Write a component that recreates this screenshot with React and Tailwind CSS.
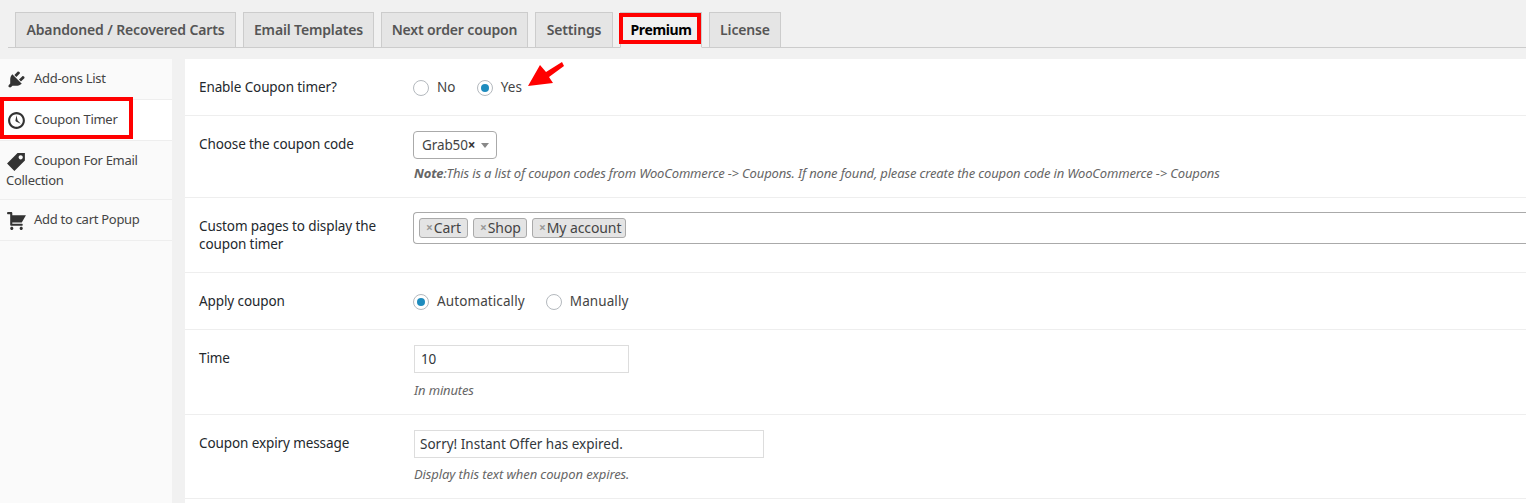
import React from "react";

const font = { fontFamily: '"Noto Sans", sans-serif' };

const icons = {
  plug: "M13.11 4.36L9.87 7.6 8 5.73l3.24-3.24c.35-.34 1.05-.2 1.56.32.52.51.66 1.21.31 1.55zm-8 1.77l.91-1.12 9.01 9.01-1.19.84c-.71.71-2.63 1.16-3.82 1.16H6.14L4.9 17.26c-.59.59-1.54.59-2.12 0-.59-.58-.59-1.53 0-2.12l1.24-1.24v-3.88c0-1.13.4-3.19 1.09-3.89zm7.26 3.97l3.24-3.24c.34-.35 1.04-.21 1.55.31.52.51.66 1.21.31 1.55l-3.24 3.25z",
  clock: "M10 2c4.42 0 8 3.58 8 8s-3.58 8-8 8-8-3.58-8-8 3.58-8 8-8zm0 14c3.31 0 6-2.69 6-6s-2.69-6-6-6-6 2.69-6 6 2.69 6 6 6zm-.71-5.29c.07.05.14.1.23.15l-.02.02L14 13l-3.03-3.19L10 5l-.97 4.81h.01c0 .02-.01.05-.02.09S9 9.97 9 10c0 .28.1.52.29.71z",
  tag: "M11 2h7v7L8 19l-7-7zm3 6c1.1 0 2-.9 2-2s-.9-2-2-2-2 .9-2 2 .9 2 2 2z",
  cart: "M6 13h9c.55 0 1 .45 1 1s-.45 1-1 1H5c-.55 0-1-.45-1-1V4H2c-.55 0-1-.45-1-1s.45-1 1-1h3c.55 0 1 .45 1 1v2h13l-4 7H6v1zm-.5 3c.83 0 1.5.67 1.5 1.5S6.33 19 5.5 19 4 18.33 4 17.5 4.67 16 5.5 16zm9 0c.83 0 1.5.67 1.5 1.5s-.67 1.5-1.5 1.5-1.5-.67-1.5-1.5.67-1.5 1.5-1.5z",
};

function Dash({ d }) {
  return (
    <svg width="21" height="21" viewBox="0 0 20 20" fill="#333" className="block">
      <path d={d} />
    </svg>
  );
}

function Tab({ children, active, w }) {
  return (
    <div className={`relative h-[36px] ${w} flex items-center justify-center border border-[#ccc] pb-[2px] text-[14px] ${active ? "bg-[#f1f1f1] font-bold tracking-[-0.35px] text-black border-b-[#f1f1f1]" : "bg-[#e5e5e5] font-semibold tracking-[-0.15px] text-[#555]"}`}>
      {children}
      {active && <div className="absolute left-[-2px] right-0 top-0 h-[31px] border-[4px] border-[#f00]" />}
    </div>
  );
}

function SideItem({ icon, children, h, active, wrap }) {
  return (
    <div className={`relative ${h} border-b border-[#eee] text-[13px] tracking-[-0.28px] text-[#444] ${active ? "bg-white" : ""}`}>
      {wrap ? (
        <div className="pl-[6px] pt-[9px] leading-[20px]">
          <span className="-my-[3px] inline-block w-[28px] align-middle"><Dash d={icon} /></span>
          {children}
        </div>
      ) : (
        <div className="flex h-full items-center pl-[6px]">
          <span className="w-[28px]"><Dash d={icon} /></span>
          {children}
        </div>
      )}
      {active && <div className="absolute left-0 top-[-3px] h-[42px] w-[133px] border-[4px] border-[#f00]" />}
    </div>
  );
}

function Radio({ checked, label }) {
  return (
    <label className="flex items-center gap-[8px] tracking-[0.1px]">
      <span className="flex h-[16px] w-[16px] items-center justify-center rounded-full border border-[#b4b9be] bg-white">
        {checked && <span className="h-[8px] w-[8px] rounded-full bg-[#1e8cbe]" />}
      </span>
      <span>{label}</span>
    </label>
  );
}

function Row({ label, h, children }) {
  return (
    <div className={`flex ${h} border-b border-[#eee]`}>
      <div className="w-[228px] shrink-0 pl-[14px] pr-[10px] pt-[19px] leading-[18px] text-[#23282d]">{label}</div>
      <div className="min-w-0 flex-1">{children}</div>
    </div>
  );
}

function Chip({ children, w }) {
  return (
    <span className={`flex h-[20px] ${w} items-center rounded-[3px] border border-[#aaa] bg-[#e4e4e4] pb-[1px] pl-[6px] text-[14px] text-[#444]`}>
      <span className="mr-[1px] text-[12px] font-bold text-[#999]">×</span>
      {children}
    </span>
  );
}

export default function App() {
  return (
    <div style={font} className="h-[503px] w-[1526px] overflow-hidden bg-[#f1f1f1] text-[13.5px] tracking-[-0.1px] text-[#444]">
      <div className="ml-[8px] flex h-[48px] gap-[7px] border-b border-[#ccc] pl-[7px] pt-[12px]">
        <Tab w="w-[221px]">Abandoned / Recovered Carts</Tab>
        <Tab w="w-[131px]">Email Templates</Tab>
        <Tab w="w-[147px]">Next order coupon</Tab>
        <Tab w="w-[78px]">Settings</Tab>
        <Tab w="w-[82px]" active>Premium</Tab>
        <Tab w="w-[72px]">License</Tab>
      </div>
      <div className="mt-[11px] flex gap-[13px]">
        <div className="h-[444px] w-[172px] shrink-0 bg-[#fafafa]">
          <SideItem h="h-[41px]" icon={icons.plug}>Add-ons List</SideItem>
          <SideItem h="h-[41px]" active icon={icons.clock}>Coupon Timer</SideItem>
          <SideItem h="h-[59px]" wrap icon={icons.tag}>Coupon For Email Collection</SideItem>
          <SideItem h="h-[41px]" icon={icons.cart}>Add to cart Popup</SideItem>
        </div>
        <div className="h-[444px] min-w-0 flex-1 bg-white">
          <Row label="Enable Coupon timer?" h="h-[57px]">
            <div className="flex h-full items-center gap-[21px] pt-[1px]">
              <Radio label="No" />
              <div className="relative">
                <Radio checked label="Yes" />
                <svg className="absolute left-[51px] top-[-16px]" width="38" height="27" viewBox="0 0 38 27">
                  <path d="M0 25 L12 4 L18 11 L34 1 L36 5 L21 16 L25 22 Z" fill="#f00" />
                </svg>
              </div>
            </div>
          </Row>
          <Row label="Choose the coupon code" h="h-[82px]">
            <div className="pt-[15px]">
              <div className="flex h-[28px] w-[84px] items-center rounded-[4px] border border-[#aaa] pl-[8px] text-[#444]">
                Grab50<span className="font-bold text-[#333]">×</span>
                <span className="ml-[6px] h-0 w-0 border-x-[4px] border-t-[5px] border-x-transparent border-t-[#888]" />
              </div>
              <p className="mt-[5px] whitespace-nowrap pl-[1px] text-[13px] tracking-[-0.155px] italic text-[#666]"><b>Note</b>:This is a list of coupon codes from WooCommerce -&gt; Coupons. If none found, please create the coupon code in WooCommerce -&gt; Coupons</p>
            </div>
          </Row>
          <Row label="Custom pages to display the coupon timer" h="h-[75px]">
            <div className="pt-[14px]">
              <div className="flex h-[32px] items-center gap-[5px] rounded-l-[4px] border border-r-0 border-[#aaa] pl-[5px]">
                <Chip w="w-[49px]">Cart</Chip>
                <Chip w="w-[54px]">Shop</Chip>
                <Chip w="w-[94px]">My account</Chip>
              </div>
            </div>
          </Row>
          <Row label="Apply coupon" h="h-[57px]">
            <div className="flex h-full items-center gap-[21px] pt-[1px]">
              <Radio checked label="Automatically" />
              <Radio label="Manually" />
            </div>
          </Row>
          <Row label="Time" h="h-[85px]">
            <div className="pl-[1px] pt-[15px]">
              <div className="flex h-[28px] w-[215px] items-center border border-[#ddd] pl-[6px] text-[#32373c]">10</div>
              <p className="mt-[8px] text-[13px] tracking-[-0.15px] italic text-[#666]">In minutes</p>
            </div>
          </Row>
          <Row label="Coupon expiry message" h="h-[84px]">
            <div className="pl-[1px] pt-[15px]">
              <div className="flex h-[28px] w-[350px] items-center border border-[#ddd] pl-[5px] tracking-normal text-[#32373c]">Sorry! Instant Offer has expired.</div>
              <p className="mt-[7px] text-[13px] italic text-[#666]">Display this text when coupon expires.</p>
            </div>
          </Row>
        </div>
      </div>
    </div>
  );
}
